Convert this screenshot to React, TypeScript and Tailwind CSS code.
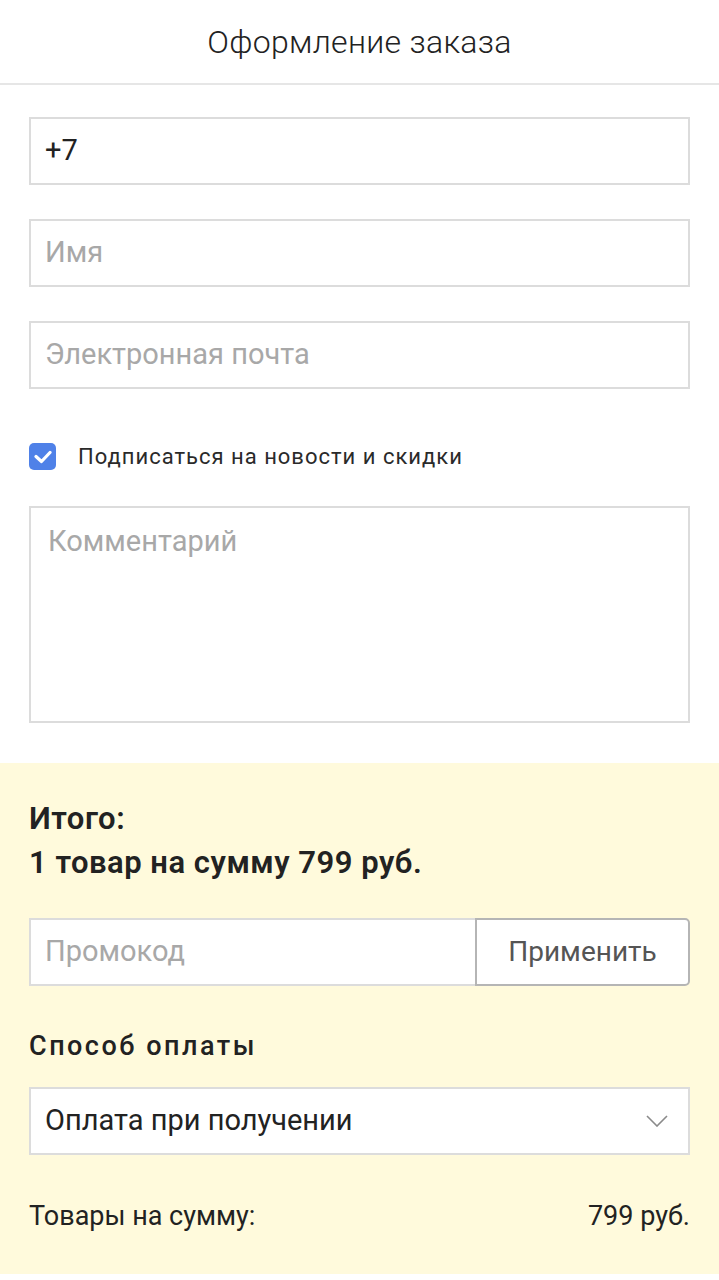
import React from 'react';

const font = { fontFamily: 'Roboto, "Noto Sans", sans-serif' };

const Field = ({ value, placeholder }: { value?: string; placeholder?: string }) => (
  <div className="flex h-[68px] items-center border-2 border-[#dcdcdc] bg-white px-[14px] text-[29px]">
    {value ? (
      <span className="text-[#222]">{value}</span>
    ) : (
      <span className="text-[#a8a8a8]">{placeholder}</span>
    )}
  </div>
);

export default function App() {
  return (
    <div className="min-h-[1280px] w-[719px] bg-white" style={font}>
      <header className="flex h-[85px] items-center justify-center border-b-2 border-[#e6e6e6]">
        <h1 className="text-[32px] font-light tracking-[0.3px] text-[#222]">Оформление заказа</h1>
      </header>

      <div className="flex flex-col gap-[34px] px-[29px] pt-[32px]">
        <Field value="+7" />
        <Field placeholder="Имя" />
        <Field placeholder="Электронная почта" />
      </div>

      <label className="flex items-center gap-[22px] px-[29px] pt-[54px]">
        <span className="flex h-[27px] w-[27px] items-center justify-center rounded-[5px] bg-[#4f81e8]">
          <svg width="18" height="14" viewBox="0 0 18 14" fill="none">
            <path d="M2 6.5 L7.5 11.5 L16 2.5" stroke="white" strokeWidth="3.2" strokeLinecap="round" strokeLinejoin="round" />
          </svg>
        </span>
        <span className="text-[22px] leading-[27px] tracking-[1px] text-[#2a2a2a]">Подписаться на новости и скидки</span>
      </label>

      <div className="px-[29px] pt-[36px] pb-[40px]">
        <div className="h-[217px] border-2 border-[#dcdcdc] bg-white px-[17px] pt-[12px] text-[29px] text-[#a8a8a8]">
          Комментарий
        </div>
      </div>

      <section className="bg-[#fffadc] px-[29px] pt-[34px] pb-[40px]">
        <div className="text-[31px] font-semibold leading-[44px] tracking-[0.5px] text-[#222]">
          <div>Итого:</div>
          <div>1 товар на сумму 799 руб.</div>
        </div>

        <div className="mt-[33px] flex h-[68px]">
          <div className="flex flex-1 items-center border-2 border-r-0 border-[#dcdcdc] bg-white px-[14px] text-[29px] text-[#a8a8a8]">
            Промокод
          </div>
          <button className="w-[215px] rounded-r-[5px] border-2 border-[#b5b5b5] bg-white text-[28px] text-[#555]">
            Применить
          </button>
        </div>

        <h2 className="mt-[42px] text-[27px] font-medium leading-[36px] tracking-[2.5px] text-[#222]">Способ оплаты</h2>

        <div className="mt-[23px] flex h-[68px] items-center justify-between border-2 border-[#dcdcdc] bg-white pl-[14px] pr-[20px] text-[29px] text-[#222]">
          <span>Оплата при получении</span>
          <svg width="22" height="12" viewBox="0 0 22 12" fill="none">
            <path d="M1 1 L11 11 L21 1" stroke="#8a8a8a" strokeWidth="1.6" />
          </svg>
        </div>

        <div className="mt-[43px] flex items-center justify-between text-[27px] leading-[36px] text-[#222]">
          <span>Товары на сумму:</span>
          <span>799 руб.</span>
        </div>
      </section>
    </div>
  );
}
